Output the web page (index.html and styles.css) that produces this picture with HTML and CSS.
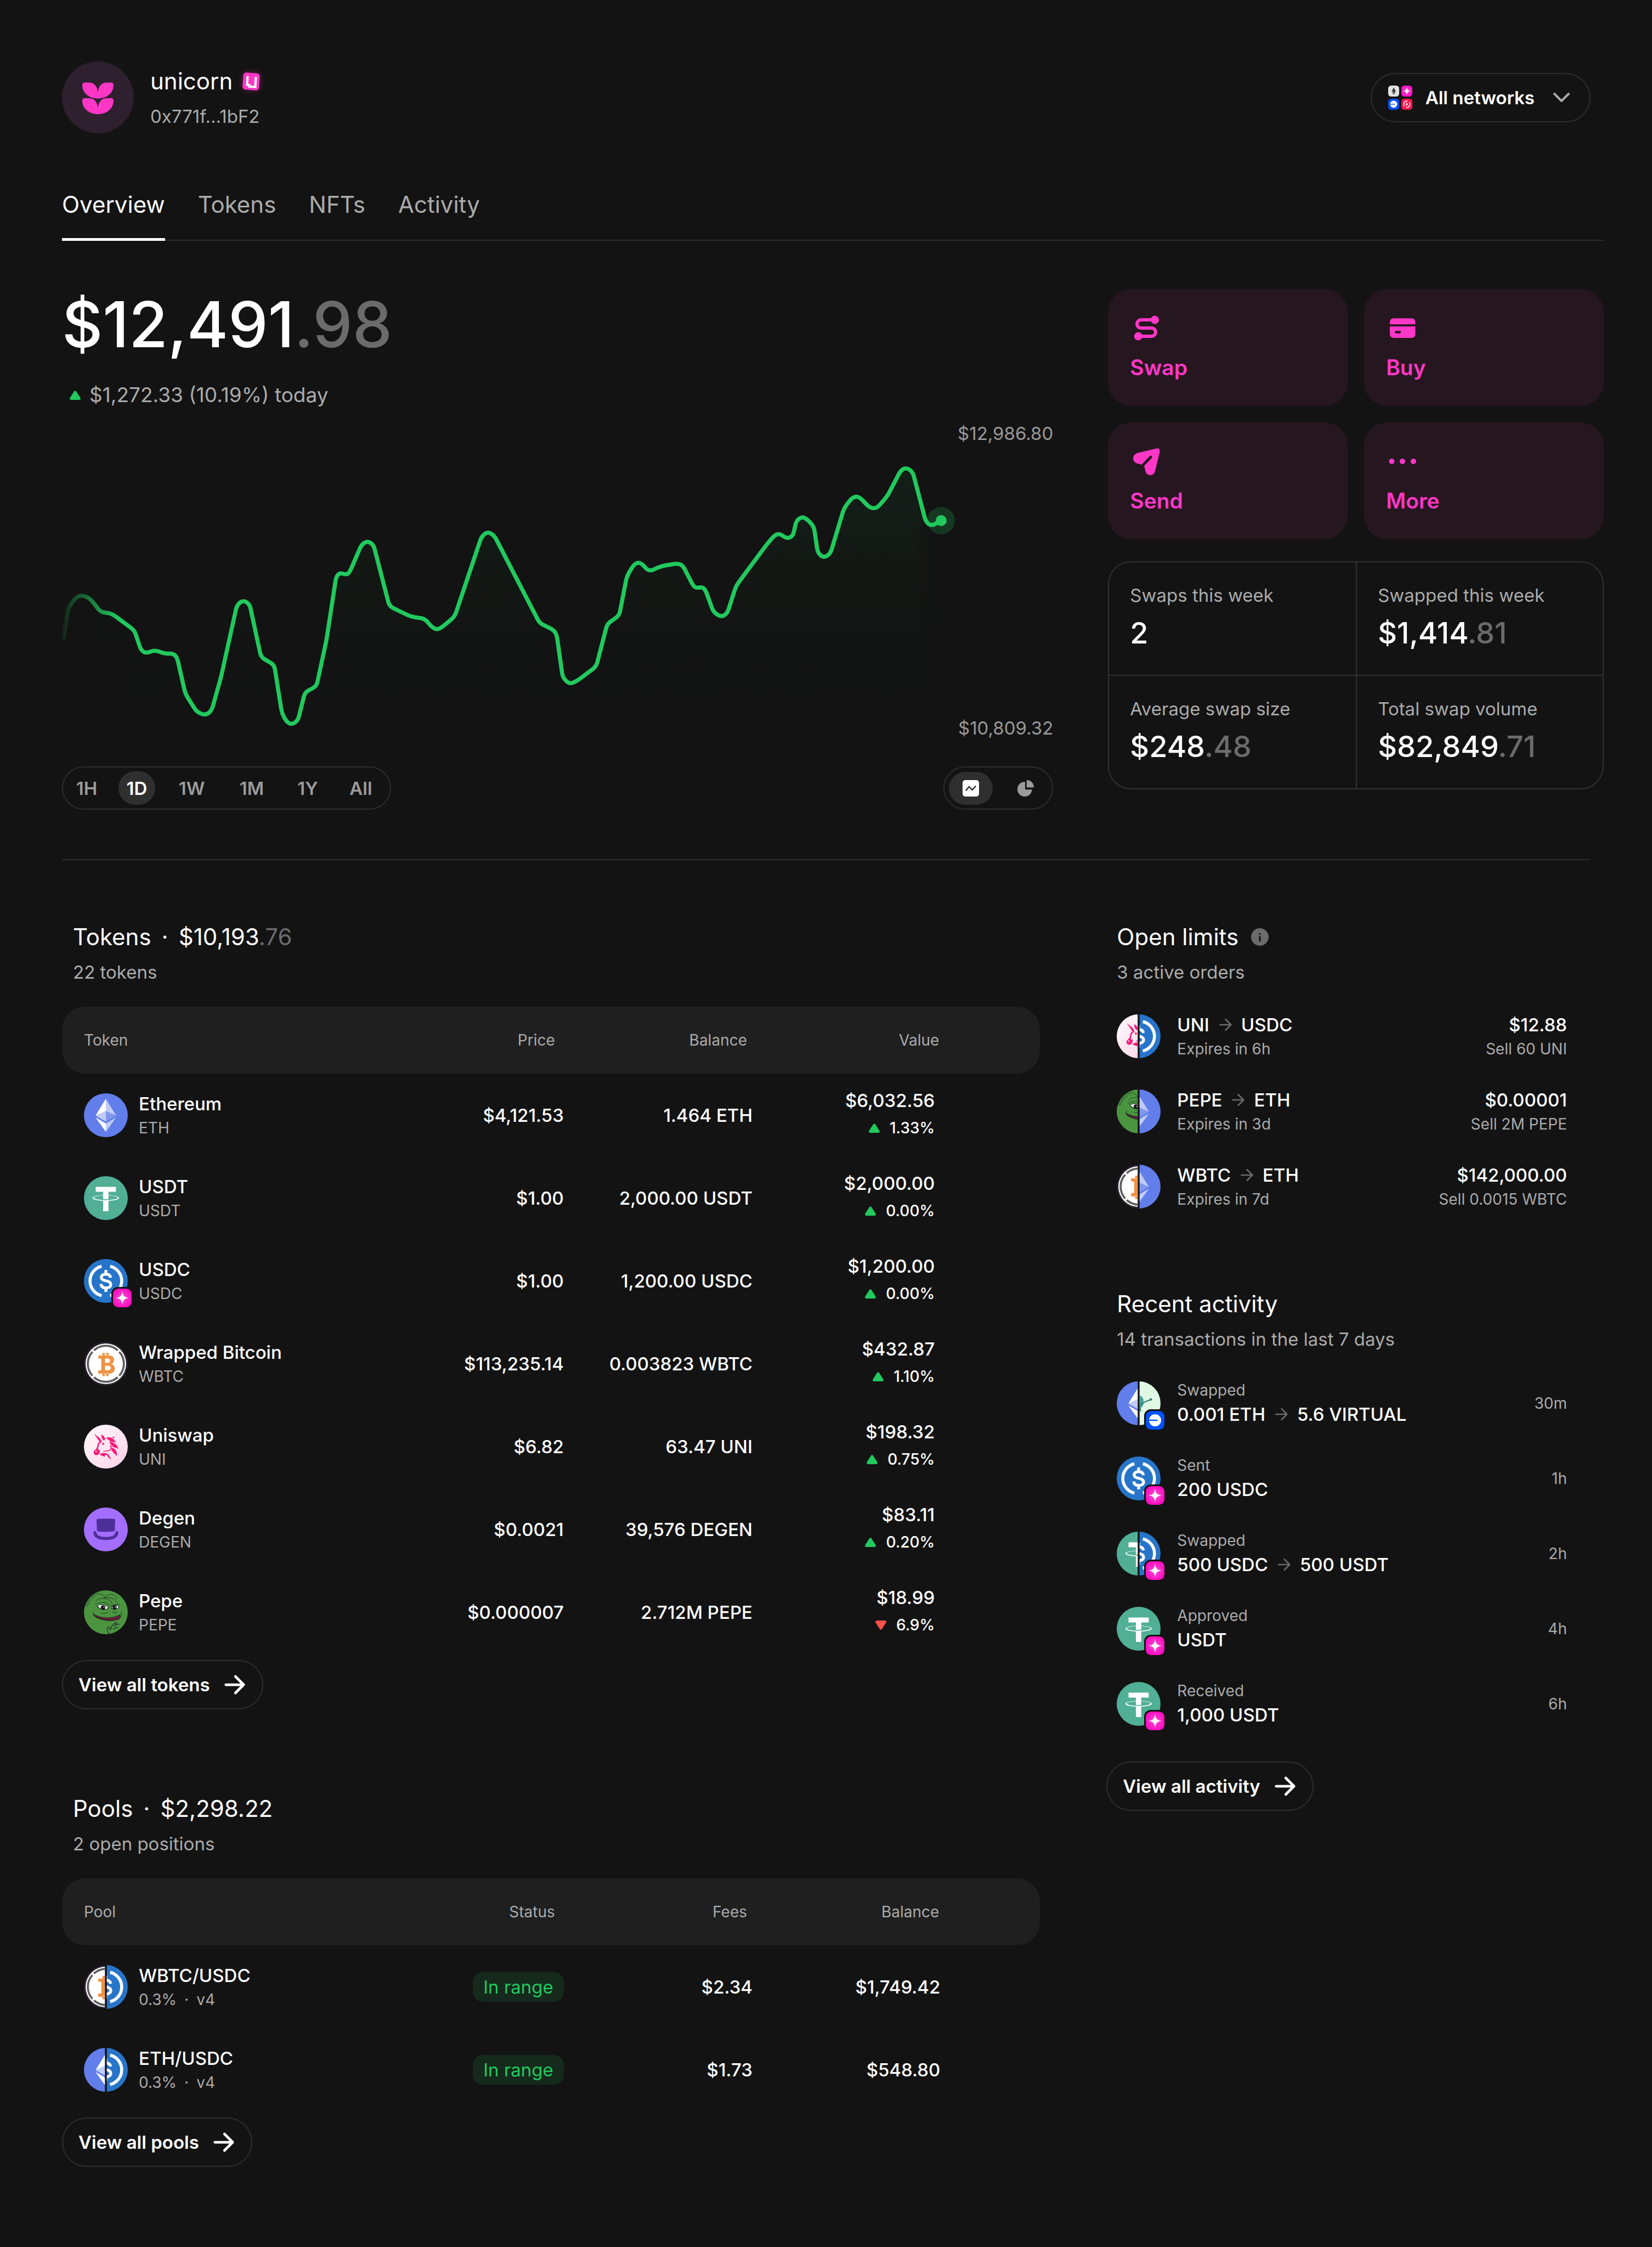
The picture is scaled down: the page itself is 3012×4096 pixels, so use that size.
FILE: index.html
```html
<!DOCTYPE html>
<html lang="en">
<head>
<meta charset="utf-8">
<meta name="viewport" content="width=device-width, initial-scale=1">
<title>unicorn – Portfolio</title>
<link rel="stylesheet" href="styles.css">
</head>
<body>
<svg class="sprite" aria-hidden="true">
  <defs>
    <clipPath id="round"><circle cx="16" cy="16" r="16"/></clipPath>
    <clipPath id="half-left"><rect x="0" y="0" width="15.3" height="32"/></clipPath>
    <clipPath id="half-right"><rect x="16.7" y="0" width="15.3" height="32"/></clipPath>
    <linearGradient id="uni-bg" x1="0" y1="0" x2="1" y2="1"><stop offset=".2" stop-color="#fdf3f7"/><stop offset="1" stop-color="#ffcfe6"/></linearGradient>
    <radialGradient id="star-bg"><stop offset="0" stop-color="#ff4fd8"/><stop offset="1" stop-color="#fc0fc0"/></radialGradient>
  </defs>
  <symbol id="eth" viewBox="0 0 32 32">
    <circle cx="16" cy="16" r="16" fill="#627eea"/>
    <g fill="#fff" transform="translate(-.5)">
      <path fill-opacity=".6" d="M16.5 4v8.87L24 16.22z"/><path d="M16.5 4L9 16.22l7.5-3.35z"/>
      <path fill-opacity=".6" d="M16.5 21.97v6.03L24 17.62z"/><path d="M16.5 28v-6.03L9 17.62z"/>
      <path fill-opacity=".2" d="M16.5 20.57L24 16.22l-7.5-3.35z"/><path fill-opacity=".6" d="M9 16.22l7.5 4.35v-7.7z"/>
    </g>
  </symbol>
  <symbol id="usdt" viewBox="0 0 32 32">
    <circle cx="16" cy="16" r="16" fill="#50af95"/>
    <path fill="#fff" d="M17.922 17.383v-.002c-.11.008-.677.042-1.942.042-1.01 0-1.721-.03-1.971-.042v.003c-3.888-.171-6.79-.848-6.79-1.658 0-.809 2.902-1.486 6.79-1.66v2.644c.254.018.982.061 1.988.061 1.207 0 1.812-.05 1.925-.06v-2.643c3.88.173 6.775.85 6.775 1.658 0 .81-2.895 1.485-6.775 1.657m0-3.59v-2.366h5.414V7.819H8.595v3.608h5.414v2.365c-4.4.202-7.709 1.074-7.709 2.118 0 1.044 3.309 1.915 7.709 2.118v7.582h3.913v-7.584c4.393-.202 7.694-1.073 7.694-2.116 0-1.043-3.301-1.914-7.694-2.117"/>
  </symbol>
  <symbol id="usdc" viewBox="0 0 32 32">
    <circle cx="16" cy="16" r="16" fill="#2775ca"/>
    <path fill="none" stroke="#fff" stroke-width="2.2" d="M12.9 5.3a11 11 0 0 0 0 21.4M19.1 5.3a11 11 0 0 1 0 21.4"/>
    <path fill="none" stroke="#fff" stroke-width="2.1" d="M19.5 13.6c-.3-1.8-1.6-2.6-3.4-2.6-2 0-3.4 1-3.4 2.4 0 1.600 1.300 2.100 3.400 2.500s3.500 1 3.500 2.700c0 1.600-1.500 2.500-3.500 2.500-2.100 0-3.500-1-3.700-2.900M16 8v3M16 21v3"/>
  </symbol>
  <symbol id="wbtc" viewBox="0 0 32 32">
    <circle cx="16" cy="16" r="16" fill="#2b2130"/><circle cx="16" cy="16" r="14.8" fill="#fff"/>
    <path fill="none" stroke="#5f5f5f" stroke-width="1.5" d="M7.300 6.200a13 13 0 0 1 17.400 0M25.800 7.300a13 13 0 0 1 0 17.400M24.700 25.800a13 13 0 0 1-17.400 0M6.200 24.700a13 13 0 0 1 0-17.400"/>
    <path fill="#f09242" fill-rule="evenodd" d="M13.500 8h1.700v2h-1.700zM16.300 8H18v2.200h-1.700zM13.500 23h1.700v2h-1.700zM16.300 23H18v2h-1.700zM10.500 9.900h7.800c2.400 0 3.700 1.400 3.700 3.300 0 1.500-.8 2.500-2 3 1.600.5 2.500 1.700 2.500 3.400 0 2.300-1.700 3.600-4.300 3.600h-7.700v-2.400h1.400c.6 0 .8-.3.8-.8v-7c0-.5-.2-.8-.8-.8h-1.400zM15.400 12.200v3.100h1.900c1.200 0 1.800-.6 1.800-1.600 0-.9-.6-1.500-1.800-1.500zM15.400 17.400v3.400h2.200c1.300 0 2-.7 2-1.700s-.7-1.700-2-1.700z"/>
  </symbol>
  <symbol id="uni" viewBox="0 0 32 32">
    <circle cx="16" cy="16" r="16" fill="url(#uni-bg)"/>
    <g fill="#ff1a79">
      <path d="M7.200 6.300l4.500 3.700 1.300 2.200-1.500.4z"/>
      <path d="M12.600 7.400c1.600.2 2.500 1.500 3 3.300l-.9.900c-1.300-.8-2-2.300-2.100-4.200z"/>
      <path d="M12.600 12.200c-1.700.4-2.500 1-2.700 2.600-.1 1.800-.8 2.900-2.200 4-.7.700-.7 1.800-.3 2.500.6 1 2.200 1.200 3.100.4.900-.9 1.200-1.700 1.100-2.900-.3-.7-1-.4-1.300-.9.400-1.100.4-3.200 1-4 .400-.5 1-.8 1.700-1z"/>
      <path d="M16 9.500c2.600-.8 5.800-.2 7.200 3.600-1.500-.7-2.600-.3-3.800-.9-1.300-.6-2-1.900-3.400-2.700z"/>
      <path d="M18.300 12.400c3.200.2 6.400 1.900 6.700 5.400-1.500-1.300-2.800-1-4.200-1.900-1-.7-1.400-2.200-2.500-3.500z"/>
      <path d="M20.100 16.700c2 .3 4.400 1.900 3.900 6.200-.8-1.200-2.100-1.900-2.900-2.900-.800-1-.9-2.300-1-3.300z"/>
      <path d="M11.400 22c1-1.400 3.200-1.700 5-1.100 1.700.6 2 1.700 2.500 2.700.3.700.7 1.100 1.400 1.300-1.300.2-2.300-.4-2.700-1.400-.4-1-.8-1.700-1.600-1.600-.9.100-.9 1.300-.1 1.300-1.600.2-3-.9-4.500-1.200z"/>
      <circle cx="14" cy="14" r=".8"/><circle cx="21.500" cy="9.300" r=".6"/>
    </g>
    <path d="M19.400 15c.8 2.400.2 4-1.800 4l-3.400.5" fill="none" stroke="#ff1a79" stroke-width=".7"/>
    <circle cx="8.800" cy="19.500" r=".5" fill="#fdeef4"/>
  </symbol>
  <symbol id="degen" viewBox="0 0 32 32">
    <circle cx="16" cy="16" r="16" fill="#a36efd"/>
    <path fill="#4e2f99" d="M10 8.300Q16 7.800 22 8.300q.8.100.8 1l-.3 7.200q0 .8-.9.900-5.600.8-11.200 0-.9-.1-.9-.9l-.300-7.200q0-.9.800-1z"/>
    <path fill="none" stroke="#4e2f99" stroke-width="2.300" stroke-linecap="round" d="M8 18.400q.5 4.200 8 4.200t8-4.200"/>
  </symbol>
  <symbol id="pepe" viewBox="0 0 32 32">
    <g clip-path="url(#round)">
      <rect width="32" height="32" fill="#4c9540"/>
      <g fill="none" stroke="#1d3b2c" stroke-width=".4">
        <path d="M.5 12C3 6.500 6 2.800 10.500 2.500c2.500-.2 4.300 1.200 4.500 3 1.300-2.300 5-3.500 7.500-1.800 1 .7 1.500 1.600 1.500 2.600M2 12c2-4 3.500-6 6-7.600M8.500 8c2-2.300 5-2.800 8.500-1.500 2 .8 3.500 2 3.800 3.500M15 5.500c4-.8 7.500.6 9.500 3.500M8 10.500c3-2.200 7-2.200 10.500-.3l1.500 1.300c1.500-1.300 4-1.700 6-1.300M12.500 16.500c2 .7 4 .3 5.300-.8M20.500 15.500c.7.900 2.600.9 4 .3M7.200 15.500c-.5 1-.6 1.800 0 2.600M27 15.500c.6 1 .3 3-.4 4.500"/>
        <path stroke-width=".6" d="M18.200 31.500c-1-1.700-1.700-3.800-.8-4.700 1-.6 1.200.6 2 1.800.2-2.200 2-4.200 3.800-5 .9-.2 1 .6.300 1.200l-1.500 1.600c1.600-1.300 3.200-2 4-1.400M21.500 28.500c1.200-1.200 2.500-1.600 3.500-1.200"/>
      </g>
      <path fill="#fff" stroke="#173325" stroke-width=".5" d="M9.500 11.300c3-1.700 6.500-1.200 8.600 1.500-2.200 2-6 1.800-8.600-1.500zM19.600 12.800c1.400-1.900 4-2.300 6-1.300-.3 2.300-3.500 3.300-6 1.300z"/>
      <circle cx="14" cy="12.500" r="1.600" fill="#111"/><circle cx="22.400" cy="12.500" r="1.500" fill="#111"/>
      <circle cx="14.600" cy="12.300" r=".4" fill="#fff"/><circle cx="22.900" cy="12.300" r=".4" fill="#fff"/>
      <path fill="#7b2542" stroke="#1d2b22" stroke-width=".5" d="M6.800 17.300c5.200 3 12.500 4 19.300.6.700.8.300 2.600-1 3.300-5 2-12.500.6-16.300-1.700-1-.6-1.900-1.400-2-2.200z"/>
      <path fill="none" stroke="#2b0f1a" stroke-width=".4" d="M8.500 19c5 2.600 12 3 17.200.8"/>
    </g>
  </symbol>
  <symbol id="virtual" viewBox="0 0 32 32">
    <circle cx="16" cy="16" r="16" fill="#e0f8e4"/>
    <ellipse cx="16.500" cy="15" rx="3.200" ry="4.600" fill="#45a596"/>
    <path d="M17 17l4-2.200 3.500-1.300M16 14l1.500 8" stroke="#2f7f74" stroke-width=".8" fill="none"/>
    <circle cx="24.900" cy="13.200" r=".9" fill="#2f7f74"/>
  </symbol>
  <symbol id="unichain" viewBox="0 0 20 20">
    <rect width="20" height="20" rx="5.500" fill="url(#star-bg)"/>
    <path fill="#fff" d="M10 2c.3 5.500 2 7.700 8 8-6 .3-7.700 2.500-8 8-.3-5.500-2-7.700-8-8 6-.3 7.700-2.500 8-8z"/>
  </symbol>
  <symbol id="base" viewBox="0 0 20 20">
    <rect width="20" height="20" rx="5.500" fill="#0052ff"/>
    <circle cx="10" cy="10" r="6.500" fill="#fff"/><path d="M3 10h9.500" stroke="#0052ff" stroke-width="1.400"/>
  </symbol>
  <symbol id="mainnet" viewBox="0 0 20 20">
    <rect width="20" height="20" rx="5.500" fill="#e2e2e2"/>
    <path fill="#555" d="M10 3.500l-3.700 6.700L10 12.400z"/><path fill="#222" d="M10 3.500l3.700 6.700-3.700 2.200zM10 13.300v3.200l3.700-5.400z"/><path fill="#555" d="M10 13.300v3.200l-3.700-5.400z"/>
  </symbol>
  <symbol id="redchain" viewBox="0 0 20 20">
    <rect width="20" height="20" rx="5.500" fill="#fb1650"/>
    <path fill="none" stroke="#fff" stroke-width="1.500" d="M11.500 4.600A5.600 5.600 0 0 0 5.800 13.700M8.500 15.400A5.600 5.600 0 0 0 14.200 6.300"/>
    <path fill="#fff" d="M10.800 6.500L7 10.500h2.400L8.500 13.500l4.200-4.200h-2.600z"/>
  </symbol>
  <symbol id="arrow" viewBox="0 0 20 20"><path d="M3.500 10h12.600M10.500 4l6 6-6 6" fill="none" stroke="currentColor" stroke-width="1.900" stroke-linecap="round" stroke-linejoin="round"/></symbol>
  <symbol id="arrow-thin" viewBox="0 0 20 20"><path d="M2.500 10h15M10.500 2.500L18 10l-7.500 7.500" fill="none" stroke="currentColor" stroke-width="2" stroke-linecap="round" stroke-linejoin="round"/></symbol>
  <symbol id="up" viewBox="0 0 20 17"><path fill="#21c95e" d="M8.400 1Q10-.7 11.600 1l7.900 12.300Q20.700 17 17.500 17H2.500Q-.7 17 .5 13.300z"/></symbol>
  <symbol id="down" viewBox="0 0 20 17"><path fill="#ff5148" d="M8.400 16Q10 17.700 11.600 16l7.900-12.300Q20.700 0 17.500 0H2.500Q-.7 0 .5 3.700z"/></symbol>
</svg>

<div class="page">
  <header class="header">
    <div class="profile">
      <svg class="avatar" viewBox="0 0 131 131" aria-hidden="true">
        <circle cx="65.500" cy="65.500" r="65.500" fill="#2e202e"/>
        <g fill="#ff37c7">
          <path id="leaf" d="M37 43q0-4.500 4.500-4.500H50c10 0 15.200 9 15.500 19 .3-10 5.500-19 15.500-19h8.500q4.500 0 4.500 4.500c0 14-12 24.500-28.500 24.500S37 57 37 43z"/>
          <use href="#leaf" y="28.500"/>
        </g>
      </svg>
      <div class="profile-text">
        <h1 class="name">unicorn
          <svg class="name-badge" viewBox="0 0 33 33" aria-hidden="true"><rect x="1" y="1" width="30" height="31" rx="5" fill="#ff37c7" transform="rotate(4 16 16)"/><path d="M9 7v16h4v3h11V8" fill="none" stroke="#fff" stroke-width="4" transform="rotate(3 16 16)"/></svg>
        </h1>
        <p class="address">0x771f...1bF2</p>
      </div>
    </div>
    <button class="networks" type="button">
      <svg class="networks-icon" viewBox="0 0 44 44" aria-hidden="true"><use href="#mainnet" width="20" height="20"/><use href="#unichain" x="24" width="20" height="20"/><use href="#base" y="24" width="20" height="20"/><use href="#redchain" x="24" y="24" width="20" height="20"/></svg>
      <span>All networks</span>
      <svg class="chevron" viewBox="0 0 34 20" aria-hidden="true"><path d="M4 3l13 13L30 3" fill="none" stroke="#ababab" stroke-width="4" stroke-linecap="round" stroke-linejoin="round"/></svg>
    </button>
  </header>

  <nav class="tabs">
    <a class="tab tab-active" href="#overview" aria-current="page">Overview</a>
    <a class="tab" href="#tokens">Tokens</a>
    <a class="tab" href="#nfts">NFTs</a>
    <a class="tab" href="#activity">Activity</a>
  </nav>

  <main>
    <section class="columns overview" id="overview">
      <div>
        <p class="balance">$12,491<span class="dim">.98</span></p>
        <p class="change"><svg class="tri" aria-hidden="true"><use href="#up"/></svg>$1,272.33 (10.19%) today</p>
        <div class="chart">
          <svg class="chart-plot" viewBox="113 770 1630 577" preserveAspectRatio="xMinYMin meet" role="img" aria-label="Portfolio value over one day">
            <defs>
              <linearGradient id="area-fill" gradientUnits="userSpaceOnUse" x1="0" y1="850" x2="0" y2="1290"><stop offset="0" stop-color="#21c95e" stop-opacity=".07"/><stop offset=".4" stop-color="#21c95e" stop-opacity=".03"/><stop offset="1" stop-color="#21c95e" stop-opacity="0"/></linearGradient>
              <linearGradient id="fade" gradientUnits="userSpaceOnUse" x1="108" y1="0" x2="215" y2="0"><stop offset="0" stop-color="#000"/><stop offset=".15" stop-color="#333"/><stop offset="1" stop-color="#fff"/></linearGradient>
              <linearGradient id="fade-area" gradientUnits="userSpaceOnUse" x1="113" y1="0" x2="1716" y2="0"><stop offset="0" stop-color="#000"/><stop offset=".15" stop-color="#fff"/><stop offset=".97" stop-color="#fff"/><stop offset="1" stop-color="#000"/></linearGradient>
              <mask id="line-mask" maskUnits="userSpaceOnUse" x="100" y="760" width="1700" height="600"><rect x="100" y="760" width="1700" height="600" fill="url(#fade)"/></mask>
              <mask id="area-mask" maskUnits="userSpaceOnUse" x="100" y="760" width="1700" height="600"><rect x="100" y="760" width="1700" height="600" fill="url(#fade-area)"/></mask>
            </defs>
            <path id="chart-area" fill="url(#area-fill)" mask="url(#area-mask)"/>
            <circle cx="1716" cy="949" r="25" fill="#21c95e" fill-opacity=".2"/>
            <path id="chart-line" fill="none" stroke="#21c95e" stroke-width="7.500" stroke-linejoin="round" mask="url(#line-mask)"/>
            <circle cx="1716" cy="949" r="10" fill="#21c95e"/>
          </svg>
          <div class="chart-scale"><span>$12,986.80</span><span>$10,809.32</span></div>
        </div>
        <div class="chart-controls">
          <div class="ranges">
            <button class="range" type="button">1H</button>
            <button class="range range-active" type="button" aria-pressed="true">1D</button>
            <button class="range" type="button">1W</button>
            <button class="range" type="button">1M</button>
            <button class="range" type="button">1Y</button>
            <button class="range" type="button">All</button>
          </div>
          <div class="views">
            <button class="view view-active" type="button" aria-label="Line chart" aria-pressed="true"><svg class="view-icon" viewBox="0 0 30 30"><rect width="30" height="30" rx="5" fill="#fff"/><path d="M6.500 18.500l5.500-6.500 5.500 6L23.500 11.500" fill="none" stroke="#2f2f2f" stroke-width="2.500" stroke-linecap="round" stroke-linejoin="round"/></svg></button>
            <button class="view" type="button" aria-label="Breakdown"><svg class="view-icon" viewBox="0 0 30 30"><path fill="#9b9b9b" d="M13 3.300C5.500 3.300 0 9.300 0 16.800S6 30 13.300 30c6.700 0 12-4.300 13.200-11.500.2-.8-.2-1.300-1-1.300H15.500c-1 0-1.500-.5-1.500-1.500V4.300c0-.7-.3-1-1-1z"/><path fill="#9b9b9b" d="M16.800 1c0-.8.4-1.100 1.200-1C24.500.5 29.500 5.500 30 12c.1.900-.3 1.500-1.300 1.500H18c-.8 0-1.200-.4-1.200-1.200z"/></svg></button>
          </div>
        </div>
      </div>

      <div>
        <div class="actions">
          <button class="action" type="button"><svg class="action-icon" viewBox="0 0 24 24"><path d="M18 6H8.200a3 3 0 0 0 0 6h7.600a3 3 0 0 1 0 6H6" fill="none" stroke="currentColor" stroke-width="2.400"/><circle cx="18.200" cy="6" r="3" fill="currentColor"/><circle cx="6.100" cy="18" r="3" fill="currentColor"/></svg>Swap</button>
          <button class="action" type="button"><svg class="action-icon" viewBox="0 0 24 24"><path fill="currentColor" fill-rule="evenodd" d="M2.800 9.300V8c0-2 1-3.100 3.100-3.100h12.400c2.100 0 3.100 1.100 3.100 3.100v1.300zM2.800 10.800h18.600v5.300c0 2-1 3.100-3.100 3.100H5.900c-2.100 0-3.100-1.100-3.100-3.100zm4.500 3.300a.9.900 0 0 0 0 1.800H10a.9.900 0 0 0 0-1.800z"/></svg>Buy</button>
          <button class="action" type="button"><svg class="action-icon" viewBox="0 0 24 24"><path fill="currentColor" d="M19.500 2.600L6 5.800C3.300 6.600 2.300 8.300 2.400 10c.2 1.900 1.300 3.100 3.200 3.600l3 .8 2 1.500.8 3.300c.5 1.800 1.800 2.900 3.500 2.800 1.700 0 3-1 3.500-2.900l3.300-13.600c.5-2-.6-3.300-2.200-2.900z"/><path d="M9.500 14.800l5.800-6" stroke="#26161f" stroke-width="1.900" stroke-linecap="round"/></svg>Send</button>
          <button class="action" type="button"><svg class="action-icon" viewBox="0 0 24 24"><g fill="currentColor"><circle cx="4.200" cy="12" r="2"/><circle cx="12" cy="12" r="2"/><circle cx="20" cy="12" r="2"/></g></svg>More</button>
        </div>
        <dl class="stats">
          <div class="stat"><dt>Swaps this week</dt><dd>2</dd></div>
          <div class="stat"><dt>Swapped this week</dt><dd>$1,414<span class="dim">.81</span></dd></div>
          <div class="stat"><dt>Average swap size</dt><dd>$248<span class="dim">.48</span></dd></div>
          <div class="stat"><dt>Total swap volume</dt><dd>$82,849<span class="dim">.71</span></dd></div>
        </dl>
      </div>
    </section>

    <hr class="divider">

    <div class="columns">
      <div class="tables">
        <section id="tokens">
          <div class="section-head">
            <h2><span>Tokens</span><span>·</span><span>$10,193<span class="dim">.76</span></span></h2>
            <p>22 tokens</p>
          </div>
          <table class="table">
            <thead><tr><th>Token</th><th>Price</th><th>Balance</th><th>Value</th></tr></thead>
            <tbody>
              <tr><td><div class="asset"><span class="coin"><svg><use href="#eth"/></svg></span><div><p>Ethereum</p><p class="sub">ETH</p></div></div></td><td>$4,121.53</td><td>1.464 ETH</td><td><p>$6,032.56</p><p class="delta"><svg class="tri"><use href="#up"/></svg>1.33%</p></td></tr>
              <tr><td><div class="asset"><span class="coin"><svg><use href="#usdt"/></svg></span><div><p>USDT</p><p class="sub">USDT</p></div></div></td><td>$1.00</td><td>2,000.00 USDT</td><td><p>$2,000.00</p><p class="delta"><svg class="tri"><use href="#up"/></svg>0.00%</p></td></tr>
              <tr><td><div class="asset"><span class="coin"><svg><use href="#usdc"/></svg><svg class="chain"><use href="#unichain"/></svg></span><div><p>USDC</p><p class="sub">USDC</p></div></div></td><td>$1.00</td><td>1,200.00 USDC</td><td><p>$1,200.00</p><p class="delta"><svg class="tri"><use href="#up"/></svg>0.00%</p></td></tr>
              <tr><td><div class="asset"><span class="coin"><svg><use href="#wbtc"/></svg></span><div><p>Wrapped Bitcoin</p><p class="sub">WBTC</p></div></div></td><td>$113,235.14</td><td>0.003823 WBTC</td><td><p>$432.87</p><p class="delta"><svg class="tri"><use href="#up"/></svg>1.10%</p></td></tr>
              <tr><td><div class="asset"><span class="coin"><svg><use href="#uni"/></svg></span><div><p>Uniswap</p><p class="sub">UNI</p></div></div></td><td>$6.82</td><td>63.47 UNI</td><td><p>$198.32</p><p class="delta"><svg class="tri"><use href="#up"/></svg>0.75%</p></td></tr>
              <tr><td><div class="asset"><span class="coin"><svg><use href="#degen"/></svg></span><div><p>Degen</p><p class="sub">DEGEN</p></div></div></td><td>$0.0021</td><td>39,576 DEGEN</td><td><p>$83.11</p><p class="delta"><svg class="tri"><use href="#up"/></svg>0.20%</p></td></tr>
              <tr><td><div class="asset"><span class="coin"><svg><use href="#pepe"/></svg></span><div><p>Pepe</p><p class="sub">PEPE</p></div></div></td><td>$0.000007</td><td>2.712M PEPE</td><td><p>$18.99</p><p class="delta"><svg class="tri"><use href="#down"/></svg>6.9%</p></td></tr>
            </tbody>
          </table>
          <button class="view-all" type="button">View all tokens<svg class="view-all-icon"><use href="#arrow"/></svg></button>
        </section>

        <section>
          <div class="section-head">
            <h2><span>Pools</span><span>·</span><span>$2,298.22</span></h2>
            <p>2 open positions</p>
          </div>
          <table class="table pools">
            <thead><tr><th>Pool</th><th>Status</th><th>Fees</th><th>Balance</th></tr></thead>
            <tbody>
              <tr><td><div class="asset"><span class="coin"><svg viewBox="0 0 32 32"><use href="#wbtc" clip-path="url(#half-left)"/><use href="#usdc" clip-path="url(#half-right)"/></svg></span><div><p>WBTC/USDC</p><p class="sub tier"><span>0.3%</span><span>·</span><span>v4</span></p></div></div></td><td><span class="status">In range</span></td><td>$2.34</td><td>$1,749.42</td></tr>
              <tr><td><div class="asset"><span class="coin"><svg viewBox="0 0 32 32"><use href="#eth" clip-path="url(#half-left)"/><use href="#usdc" clip-path="url(#half-right)"/></svg></span><div><p>ETH/USDC</p><p class="sub tier"><span>0.3%</span><span>·</span><span>v4</span></p></div></div></td><td><span class="status">In range</span></td><td>$1.73</td><td>$548.80</td></tr>
            </tbody>
          </table>
          <button class="view-all" type="button">View all pools<svg class="view-all-icon"><use href="#arrow"/></svg></button>
        </section>
      </div>

      <div class="feeds">
        <section>
          <div class="section-head">
            <h2><span>Open limits</span><svg class="info" viewBox="0 0 32 32" aria-hidden="true"><circle cx="16" cy="16" r="16" fill="#6b6b6b"/><circle cx="16" cy="10.500" r="1.700" fill="#131313"/><path d="M16 15.500v7.500" stroke="#131313" stroke-width="3" stroke-linecap="round"/></svg></h2>
            <p>3 active orders</p>
          </div>
          <ul class="feed">
            <li><span class="coin"><svg viewBox="0 0 32 32"><use href="#uni" clip-path="url(#half-left)"/><use href="#usdc" clip-path="url(#half-right)"/></svg></span><div class="feed-text"><p class="route">UNI<svg><use href="#arrow-thin"/></svg>USDC</p><p class="sub">Expires in 6h</p></div><div class="feed-end"><p>$12.88</p><p class="sub">Sell 60 UNI</p></div></li>
            <li><span class="coin"><svg viewBox="0 0 32 32"><use href="#pepe" clip-path="url(#half-left)"/><use href="#eth" clip-path="url(#half-right)"/></svg></span><div class="feed-text"><p class="route">PEPE<svg><use href="#arrow-thin"/></svg>ETH</p><p class="sub">Expires in 3d</p></div><div class="feed-end"><p>$0.00001</p><p class="sub">Sell 2M PEPE</p></div></li>
            <li><span class="coin"><svg viewBox="0 0 32 32"><use href="#wbtc" clip-path="url(#half-left)"/><use href="#eth" clip-path="url(#half-right)"/></svg></span><div class="feed-text"><p class="route">WBTC<svg><use href="#arrow-thin"/></svg>ETH</p><p class="sub">Expires in 7d</p></div><div class="feed-end"><p>$142,000.00</p><p class="sub">Sell 0.0015 WBTC</p></div></li>
          </ul>
        </section>

        <section id="activity">
          <div class="section-head">
            <h2>Recent activity</h2>
            <p>14 transactions in the last 7 days</p>
          </div>
          <ul class="feed">
            <li><span class="coin"><svg viewBox="0 0 32 32"><use href="#eth" clip-path="url(#half-left)"/><use href="#virtual" clip-path="url(#half-right)"/></svg><svg class="chain"><use href="#base"/></svg></span><div class="feed-text"><p class="sub">Swapped</p><p class="route">0.001 ETH<svg><use href="#arrow-thin"/></svg>5.6 VIRTUAL</p></div><p class="sub">30m</p></li>
            <li><span class="coin"><svg><use href="#usdc"/></svg><svg class="chain"><use href="#unichain"/></svg></span><div class="feed-text"><p class="sub">Sent</p><p>200 USDC</p></div><p class="sub">1h</p></li>
            <li><span class="coin"><svg viewBox="0 0 32 32"><use href="#usdt" clip-path="url(#half-left)"/><use href="#usdc" clip-path="url(#half-right)"/></svg><svg class="chain"><use href="#unichain"/></svg></span><div class="feed-text"><p class="sub">Swapped</p><p class="route">500 USDC<svg><use href="#arrow-thin"/></svg>500 USDT</p></div><p class="sub">2h</p></li>
            <li><span class="coin"><svg><use href="#usdt"/></svg><svg class="chain"><use href="#unichain"/></svg></span><div class="feed-text"><p class="sub">Approved</p><p>USDT</p></div><p class="sub">4h</p></li>
            <li><span class="coin"><svg><use href="#usdt"/></svg><svg class="chain"><use href="#unichain"/></svg></span><div class="feed-text"><p class="sub">Received</p><p>1,000 USDT</p></div><p class="sub">6h</p></li>
          </ul>
          <button class="view-all" type="button">View all activity<svg class="view-all-icon"><use href="#arrow"/></svg></button>
        </section>
      </div>
    </div>
  </main>
</div>
<script src="chart.js"></script>
</body>
</html>
```
FILE: styles.css
```css
:root {
  --bg: #131313;
  --surface: #1f1f1f;
  --line: #2d2d2d;
  --text: #ffffff;
  --muted: #ababab;
  --dim: #6b6b6b;
  --pink: #ff37c7;
  --pink-surface: #26161f;
  --green: #21c95e;
}

* { box-sizing: border-box; }

body {
  margin: 0;
  min-height: 100vh;
  background: var(--bg);
  color: var(--text);
  font-family: Inter, "Liberation Sans", sans-serif;
  font-size: 33px;
  line-height: 44px;
  font-weight: 500;
}

h1, h2, p, ul, dl, dd { margin: 0; padding: 0; font-weight: inherit; }
ul { list-style: none; }
a { color: inherit; text-decoration: none; }
svg { display: block; }
button {
  margin: 0;
  padding: 0;
  border: 0;
  background: none;
  color: inherit;
  font: inherit;
  cursor: pointer;
}

.sprite { position: absolute; width: 0; height: 0; }
.dim { color: var(--dim); }
.sub { color: var(--muted); font-size: 28px; line-height: 38px; font-weight: 400; }

.page { padding: 112px 88px 100px 113px; }

/* Header */
.header {
  display: flex;
  align-items: center;
  justify-content: space-between;
  margin-right: 24px;
}
.profile { display: flex; align-items: center; gap: 30px; }
.avatar { width: 131px; height: 131px; }
.name {
  display: flex;
  align-items: center;
  gap: 18px;
  font-size: 42px;
  line-height: 54px;
  font-weight: 400;
}
.name-badge { width: 33px; height: 33px; filter: drop-shadow(0 0 6px rgba(255, 55, 199, .35)); }
.address { margin-top: 15px; color: var(--muted); font-weight: 400; }
.networks {
  display: flex;
  align-items: center;
  gap: 24px;
  height: 90px;
  padding: 0 34px 0 30px;
  border: 2px solid var(--line);
  border-radius: 45px;
  font-weight: 600;
}
.networks-icon { width: 44px; height: 44px; }
.chevron { width: 34px; height: 20px; margin-left: 8px; }

/* Tabs */
.tabs {
  display: flex;
  gap: 60px;
  margin-top: 103px;
  border-bottom: 2px solid var(--line);
}
.tab {
  margin-bottom: -2px;
  padding-bottom: 34px;
  border-bottom: 5px solid transparent;
  color: var(--muted);
  font-size: 42px;
  line-height: 54px;
  font-weight: 400;
}
.tab-active { color: var(--text); border-bottom-color: var(--text); }

.columns {
  display: grid;
  grid-template-columns: minmax(0, 2fr) minmax(0, 1fr);
  gap: 100px;
  align-items: start;
}

/* Overview */
.overview { margin-top: 88px; }
.balance { font-size: 115px; line-height: 130px; }
.change {
  display: flex;
  align-items: center;
  gap: 16px;
  margin: 38px 0 0 14px;
  color: var(--muted);
  font-size: 37px;
  line-height: 50px;
  font-weight: 400;
}
.tri { width: 20px; height: 17px; }
.chart { display: flex; margin-top: 25px; }
.chart-plot { flex: 1; min-width: 0; height: 577px; overflow: visible; }
.chart-scale {
  display: flex;
  flex-direction: column;
  justify-content: space-between;
  width: 177px;
  color: #999999;
  line-height: 40px;
  font-weight: 400;
  text-align: right;
}
.chart-controls { display: flex; justify-content: space-between; margin-top: 50px; }
.ranges, .views {
  height: 79px;
  border: 2px solid var(--line);
  border-radius: 40px;
}
.ranges {
  display: grid;
  grid-template-columns: 86fr 97fr 103fr 116fr 88fr 106fr;
  width: 600px;
  align-items: center;
  justify-items: center;
}
.range {
  height: 61px;
  padding: 0 15px;
  border-radius: 30px;
  color: #9b9b9b;
  font-weight: 600;
}
.range-active { background: #2f2f2f; color: var(--text); }
.views { display: flex; align-items: center; justify-content: space-between; width: 200px; padding: 0 8px; }
.view {
  display: grid;
  place-items: center;
  width: 80px;
  height: 60px;
  border-radius: 30px;
}
.view-active { background: #2f2f2f; }
.view-icon { width: 30px; height: 30px; }

.actions { display: grid; grid-template-columns: 1fr 1fr; gap: 30px; }
.action {
  display: flex;
  flex-direction: column;
  align-items: flex-start;
  gap: 12px;
  padding: 41px 40px 40px;
  border-radius: 42px;
  background: var(--pink-surface);
  color: var(--pink);
  font-size: 39px;
  line-height: 60px;
  font-weight: 600;
}
.action-icon { width: 60px; height: 60px; }

.stats {
  display: grid;
  grid-template-columns: 1fr 1fr;
  margin-top: 40px;
  border: 2px solid #323232;
  border-radius: 42px;
}
.stat { padding: 35px 38px 40px; }
.stat:nth-child(even) { border-left: 2px solid #323232; }
.stat:nth-child(n + 3) { border-top: 2px solid #323232; }
.stat dt { color: var(--muted); line-height: 50px; font-weight: 400; }
.stat dd { margin-top: 8px; font-size: 54px; line-height: 72px; }

.divider { margin: 90px 24px 113px 0; border: 0; border-top: 2px solid var(--line); }

/* Section heads and tables */
.tables { display: grid; gap: 154px; padding-right: 24px; }
.section-head h2 {
  display: flex;
  align-items: center;
  gap: 19px;
  font-size: 42px;
  line-height: 54px;
  font-weight: 400;
}
.section-head p { margin-top: 15px; color: var(--muted); font-weight: 400; }
.tables .section-head { padding-left: 20px; }
.info { width: 32px; height: 32px; margin-left: 4px; }

.table {
  width: 100%;
  margin-top: 41px;
  border-collapse: separate;
  border-spacing: 0;
  table-layout: fixed;
}
.table th {
  width: 19.300%;
  height: 122px;
  padding: 0;
  background: var(--surface);
  color: var(--muted);
  font-size: 28px;
  line-height: 38px;
  font-weight: 400;
  text-align: right;
}
.table th:nth-child(1) { width: 34.800%; padding-left: 40px; border-radius: 42px 0 0 42px; text-align: left; }
.table th:nth-child(2) { width: 16.500%; padding-right: 16px; }
.table th:nth-child(3) { padding-right: 10px; }
.table th:nth-child(4) { width: 29.400%; padding-right: 184px; border-radius: 0 42px 42px 0; }
.table td { height: 151px; padding: 0; text-align: right; vertical-align: middle; }
.table td:first-child { padding-left: 40px; text-align: left; }
.table td:last-child { padding: 0 192px 6px 0; }
.pools td:last-child { padding: 0 182px 0 0; }

.asset { display: flex; align-items: center; gap: 20px; }
.asset .sub { margin-top: 3px; }
.tier { display: flex; gap: 14px; }
.coin { position: relative; flex: none; width: 80px; height: 80px; }
.coin svg { width: 80px; height: 80px; }
.coin .chain {
  position: absolute;
  right: -10px;
  bottom: -11px;
  width: 40px;
  height: 40px;
  border: 3px solid var(--bg);
  border-radius: 12px;
  background: var(--bg);
}
.delta {
  display: flex;
  align-items: center;
  justify-content: flex-end;
  gap: 18px;
  margin-top: 9px;
  font-size: 28px;
  line-height: 38px;
}
.status {
  display: inline-block;
  padding: 0 19px;
  border-radius: 18px;
  background: #15291c;
  color: var(--green);
  line-height: 54px;
  font-weight: 400;
}
.view-all {
  display: flex;
  align-items: center;
  gap: 20px;
  height: 90px;
  margin-top: 12px;
  padding: 0 25px 0 28px;
  border: 2px solid var(--line);
  border-radius: 45px;
  font-weight: 600;
}
.view-all-icon { width: 50px; height: 50px; }

/* Feeds */
.feeds { display: grid; gap: 119px; }
.feeds .section-head, .feed { padding: 0 67px 0 16px; }
.feed { margin-top: 26px; }
.feed li { display: flex; align-items: center; gap: 30px; height: 137px; }
.feed-text { flex: 1; }
.feed-text p + p, .feed-end p + p { margin-top: 3px; }
.feed-end { text-align: right; }
.route { display: flex; align-items: center; gap: 16px; }
.route svg { width: 26px; height: 26px; color: var(--dim); }
.feeds .view-all { margin: 37px 0 0 -3px; }
```
FILE: chart.js
```js
// Portfolio value samples as [x, y] in the plot's own coordinates.
const samples = [
  [115, 1168], [124, 1109], [138, 1089], [149, 1085], [163, 1090], [184, 1116], [203, 1118], [245, 1149],
  [257, 1185], [266, 1191], [282, 1185], [302, 1192], [316, 1191], [323, 1199], [338, 1265], [359, 1298],
  [375, 1304], [386, 1295], [403, 1234], [432, 1103], [443, 1094], [455, 1101], [476, 1198], [500, 1212],
  [514, 1300], [522, 1315], [531, 1321], [543, 1314], [556, 1262], [577, 1251], [595, 1168], [613, 1051],
  [620, 1044], [632, 1048], [638, 1042], [659, 993], [670, 986], [681, 993], [710, 1105], [749, 1124],
  [775, 1128], [786, 1142], [796, 1148], [805, 1144], [829, 1124], [878, 978], [889, 969], [901, 976],
  [984, 1136], [1009, 1148], [1015, 1157], [1026, 1235], [1038, 1247], [1051, 1242], [1087, 1215],
  [1107, 1138], [1116, 1131], [1129, 1122], [1143, 1050], [1156, 1029], [1164, 1025], [1172, 1029],
  [1178, 1037], [1186, 1041], [1205, 1032], [1236, 1027], [1245, 1031], [1264, 1068], [1270, 1072],
  [1280, 1070], [1286, 1075], [1301, 1116], [1315, 1125], [1326, 1118], [1342, 1068], [1399, 991],
  [1413, 975], [1422, 973], [1432, 980], [1438, 981], [1446, 976], [1452, 949], [1462, 942], [1471, 946],
  [1484, 960], [1491, 1008], [1502, 1017], [1514, 1009], [1539, 926], [1553, 908], [1561, 905],
  [1568, 907], [1584, 924], [1593, 927], [1601, 924], [1618, 904], [1642, 858], [1652, 852], [1664, 860],
  [1688, 951], [1698, 959], [1716, 949]
];

// Joins the samples with straight runs and rounded corners.
function linePath(points, radius) {
  const toward = (a, b) => {
    const length = Math.hypot(b[0] - a[0], b[1] - a[1]);
    const t = Math.min(radius, length / 2) / length;
    return [a[0] + (b[0] - a[0]) * t, a[1] + (b[1] - a[1]) * t];
  };
  let d = `M${points[0]}`;
  for (let i = 1; i < points.length - 1; i++) {
    d += `L${toward(points[i], points[i - 1])}Q${points[i]} ${toward(points[i], points[i + 1])}`;
  }
  return `${d}L${points[points.length - 1]}`;
}

const line = linePath(samples, 8);
document.getElementById("chart-line").setAttribute("d", line);
document.getElementById("chart-area").setAttribute("d", `${line}V1347H113Z`);
```
